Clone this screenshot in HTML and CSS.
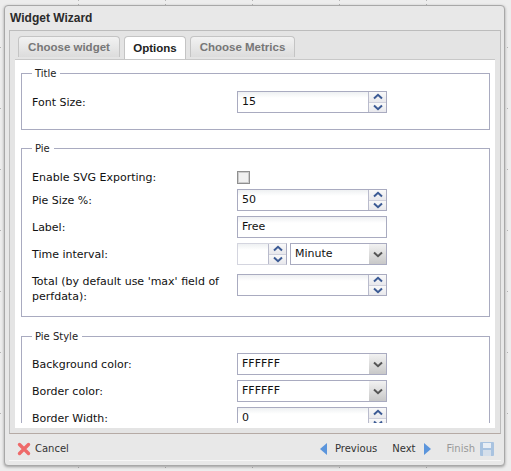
FILE: index.html
```html
<!DOCTYPE html>
<html lang="en">
<head>
    <meta charset="UTF-8">
    <title>Widget Wizard</title>
    <link rel="stylesheet" href="styles.css">
</head>
<body>
<div class="window">
    <div class="title">Widget Wizard</div>
    <div class="panel">
        <div class="tabs">
            <div class="tab tab-first">Choose widget</div>
            <div class="tab tab-active">Options</div>
            <div class="tab tab-last">Choose Metrics</div>
        </div>
        <div class="content">
            <div class="scroll">
            <fieldset class="group group-title">
                <legend>Title</legend>
                <div class="row">
                    <label>Font Size:</label>
                    <div class="field spin"><span class="value">15</span>
                        <div class="spin-btns">
                            <span class="spin-btn"><svg width="10" height="7" viewBox="0 0 10 7"><path d="M1 5.5 5 1.8 9 5.5" fill="none" stroke="#3b5a94" stroke-width="2"/></svg></span>
                            <span class="spin-btn"><svg width="10" height="7" viewBox="0 0 10 7"><path d="M1 1.5 5 5.2 9 1.5" fill="none" stroke="#3b5a94" stroke-width="2"/></svg></span>
                        </div>
                    </div>
                </div>
            </fieldset>
            <fieldset class="group group-pie">
                <legend>Pie</legend>
                <div class="row row-check">
                    <label>Enable SVG Exporting:</label>
                    <span class="check"></span>
                </div>
                <div class="row">
                    <label>Pie Size %:</label>
                    <div class="field spin"><span class="value">50</span>
                        <div class="spin-btns">
                            <span class="spin-btn"><svg width="10" height="7" viewBox="0 0 10 7"><path d="M1 5.5 5 1.8 9 5.5" fill="none" stroke="#3b5a94" stroke-width="2"/></svg></span>
                            <span class="spin-btn"><svg width="10" height="7" viewBox="0 0 10 7"><path d="M1 1.5 5 5.2 9 1.5" fill="none" stroke="#3b5a94" stroke-width="2"/></svg></span>
                        </div>
                    </div>
                </div>
                <div class="row">
                    <label>Label:</label>
                    <div class="field"><span class="value">Free</span></div>
                </div>
                <div class="row">
                    <label>Time interval:</label>
                    <div class="pair">
                        <div class="field spin spin-small">
                            <div class="spin-btns">
                                <span class="spin-btn"><svg width="10" height="7" viewBox="0 0 10 7"><path d="M1 5.5 5 1.8 9 5.5" fill="none" stroke="#3b5a94" stroke-width="2"/></svg></span>
                                <span class="spin-btn"><svg width="10" height="7" viewBox="0 0 10 7"><path d="M1 1.5 5 5.2 9 1.5" fill="none" stroke="#3b5a94" stroke-width="2"/></svg></span>
                            </div>
                        </div>
                        <div class="field combo combo-small"><span class="value">Minute</span>
                            <span class="combo-btn"><svg width="10" height="7" viewBox="0 0 10 7"><path d="M1 1.5 5 5.2 9 1.5" fill="none" stroke="#555" stroke-width="2"/></svg></span>
                        </div>
                    </div>
                </div>
                <div class="row row-tall">
                    <label>Total (by default use 'max' field of perfdata):</label>
                    <div class="field spin">
                        <div class="spin-btns">
                            <span class="spin-btn"><svg width="10" height="7" viewBox="0 0 10 7"><path d="M1 5.5 5 1.8 9 5.5" fill="none" stroke="#3b5a94" stroke-width="2"/></svg></span>
                            <span class="spin-btn"><svg width="10" height="7" viewBox="0 0 10 7"><path d="M1 1.5 5 5.2 9 1.5" fill="none" stroke="#3b5a94" stroke-width="2"/></svg></span>
                        </div>
                    </div>
                </div>
            </fieldset>
            <fieldset class="group group-style">
                <legend>Pie Style</legend>
                <div class="row">
                    <label>Background color:</label>
                    <div class="field combo"><span class="value">FFFFFF</span>
                        <span class="combo-btn"><svg width="10" height="7" viewBox="0 0 10 7"><path d="M1 1.5 5 5.2 9 1.5" fill="none" stroke="#555" stroke-width="2"/></svg></span>
                    </div>
                </div>
                <div class="row">
                    <label>Border color:</label>
                    <div class="field combo"><span class="value">FFFFFF</span>
                        <span class="combo-btn"><svg width="10" height="7" viewBox="0 0 10 7"><path d="M1 1.5 5 5.2 9 1.5" fill="none" stroke="#555" stroke-width="2"/></svg></span>
                    </div>
                </div>
                <div class="row">
                    <label>Border Width:</label>
                    <div class="field spin"><span class="value">0</span>
                        <div class="spin-btns">
                            <span class="spin-btn"><svg width="10" height="7" viewBox="0 0 10 7"><path d="M1 5.5 5 1.8 9 5.5" fill="none" stroke="#3b5a94" stroke-width="2"/></svg></span>
                            <span class="spin-btn"><svg width="10" height="7" viewBox="0 0 10 7"><path d="M1 1.5 5 5.2 9 1.5" fill="none" stroke="#3b5a94" stroke-width="2"/></svg></span>
                        </div>
                    </div>
                </div>
            </fieldset>
            </div>
        </div>
    </div>
    <div class="footer">
        <div class="action action-cancel">
            <svg width="14" height="14" viewBox="0 0 14 14"><path d="M2.5 2.5 11.5 11.5M11.5 2.5 2.5 11.5" fill="none" stroke="#ee6a6a" stroke-width="3.4" stroke-linecap="round"/></svg>
            <span>Cancel</span>
        </div>
        <div class="action action-prev">
            <svg width="9" height="14" viewBox="0 0 9 14"><path d="M8 1V13L1 7Z" fill="#5b95dc"/></svg>
            <span>Previous</span>
        </div>
        <div class="action action-next">
            <span>Next</span>
            <svg width="9" height="14" viewBox="0 0 9 14"><path d="M1 1V13L8 7Z" fill="#5b95dc"/></svg>
        </div>
        <div class="action action-finish">
            <span>Finish</span>
            <svg width="14" height="14" viewBox="0 0 14 14"><rect width="14" height="14" rx="1" fill="#a9c3e0"/><rect x="3" y="1" width="8" height="5" fill="#e8eef5"/><rect x="3" y="8" width="8" height="6" fill="#d5dfeb"/></svg>
        </div>
    </div>
</div>
</body>
</html>
```

FILE: styles.css
```css
html, body {
    height: 100%;
}

body {
    margin: 0;
    padding: 5px 6px 5px 4px;
    box-sizing: border-box;
    overflow: hidden;
    background-color: #ededed;
    background-image: url("data:image/svg+xml,%3Csvg xmlns='http://www.w3.org/2000/svg' width='87' height='61'%3E%3Cpath d='M78.5 0V61M0 47.5H87' stroke='%23b4b4b4' stroke-dasharray='1 3'/%3E%3C/svg%3E");
    font-family: "DejaVu Sans", sans-serif;
    font-size: 11px;
    color: #111;
}

.window {
    display: flex;
    flex-direction: column;
    height: 461px;
    box-sizing: border-box;
    padding: 0 3px 4px 4px;
    background: #e8e8e8;
    border: 1px solid #a8a8a8;
    border-radius: 4px;
    box-shadow: 0 1px 3px rgba(0, 0, 0, 0.35);
}

.title {
    height: 24px;
    line-height: 24px;
    padding-left: 1px;
    font-family: "Liberation Sans", sans-serif;
    font-weight: bold;
    font-size: 12px;
    color: #2b2b2b;
}

.panel {
    display: flex;
    flex-direction: column;
    height: 404px;
    box-sizing: border-box;
    padding: 5px 5px 0;
    border: 1px solid #bcbcbc;
    border-bottom-color: #b5aaa5;
    background: #e4e4e4;
}

.tabs {
    display: flex;
    gap: 4px;
    height: 23px;
    padding-left: 3px;
}

.tab {
    display: flex;
    align-items: center;
    justify-content: center;
    height: 21px;
    box-sizing: border-box;
    border: 1px solid #c4c4c4;
    border-bottom: 0;
    border-radius: 4px 4px 0 0;
    background: linear-gradient(#f2f2f2, #dcdcdc);
    font-family: "Liberation Sans", sans-serif;
    font-weight: bold;
    font-size: 11.5px;
    color: #777;
}

.tab-first {
    width: 102px;
}

.tab-active {
    width: 62px;
    height: 23px;
    background: #fff;
    color: #222;
}

.tab-last {
    width: 105px;
}

.content {
    height: 369px;
    box-sizing: border-box;
    padding: 8px 5px 5px 6px;
    background: #fff;
    border-top: 1px solid #c8c8c8;
}

.scroll {
    height: 100%;
    overflow: hidden;
}

.group {
    padding: 0 0 0 10px;
    border: 1px solid #a9abc0;
    min-width: 0;
    margin: 0;
    box-sizing: border-box;
}

.group legend {
    padding: 0 4px 0 3px;
    font-size: 10px;
    color: #222;
}

.group-title {
    height: 62px;
    margin-bottom: 13px;
    padding-top: 12px;
}

.group-pie {
    height: 174px;
    margin-bottom: 14px;
    padding-top: 17px;
}

.group-style {
    padding-top: 11px;
}

.row {
    display: flex;
    align-items: center;
    margin-bottom: 5px;
}

.row label {
    width: 205px;
    flex: none;
    line-height: 15px;
}

.row-check {
    height: 13px;
}

.row-tall {
    margin-top: 9px;
    align-items: flex-start;
}

.check {
    width: 11px;
    height: 11px;
    border: 1px solid #8f8f8f;
    outline: 1px solid #ccc;
    outline-offset: -2px;
    background: #f0f0f0;
}

.field {
    display: flex;
    width: 150px;
    height: 22px;
    box-sizing: border-box;
    border: 1px solid #a9abc0;
    background: linear-gradient(#eef0f2, #fff 6px);
}

.value {
    flex: 1;
    padding-left: 4px;
    line-height: 20px;
}

.spin-btns {
    display: flex;
    flex-direction: column;
    width: 17px;
    flex: none;
    margin-left: auto;
    border-left: 1px solid #b9bbcc;
}

.spin-btn {
    display: flex;
    align-items: center;
    justify-content: center;
    height: 10px;
    background: linear-gradient(#f9f9f9, #e8e8ec);
}

.spin-btn + .spin-btn {
    border-top: 1px solid #cfd0dc;
}

.pair {
    display: flex;
    gap: 3px;
    width: 150px;
}

.spin-small {
    width: 50px;
    border-color: #d4d5df #a9abc0 #d4d5df #d4d5df;
}

.combo-small {
    width: 97px;
}

.combo {
    background: #fff;
}

.combo-btn {
    display: flex;
    align-items: center;
    justify-content: center;
    width: 17px;
    flex: none;
    background: linear-gradient(#f2f2f2, #c8c8c8);
}

.footer {
    display: flex;
    align-items: center;
    height: 27px;
    box-sizing: border-box;
    padding: 3px 7px 0 8px;
    background: #e8e8e8;
    border-bottom: 1px solid #f6f6f6;
    font-size: 10px;
    color: #333;
}

.action {
    display: flex;
    align-items: center;
    gap: 7px;
}

.action-cancel {
    gap: 4px;
}

.action-prev {
    margin-left: auto;
}

.action-next {
    margin-left: 15px;
}

.action-finish {
    margin-left: 15px;
    gap: 5px;
    color: #999;
}
```
